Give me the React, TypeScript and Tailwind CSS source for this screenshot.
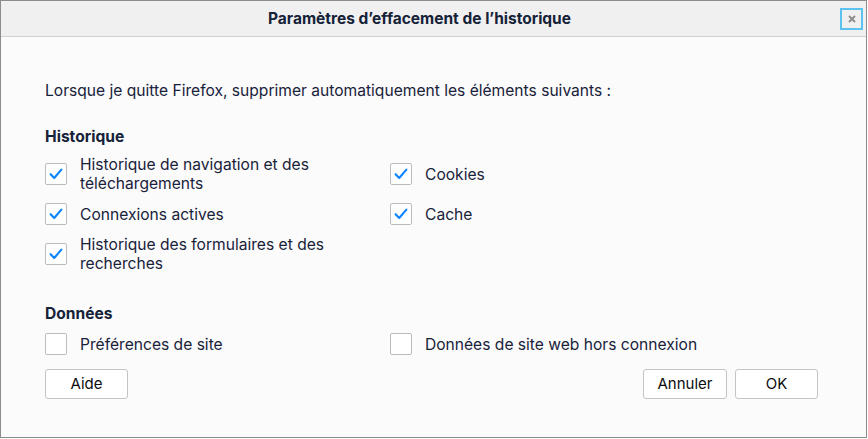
function Check({ checked }: { checked: boolean }) {
  return (
    <div className="flex h-[22px] w-[22px] shrink-0 items-center justify-center rounded-[2px] border border-[#bcbcbc] bg-white">
      {checked && (
        <svg width="14" height="12" viewBox="0 0 14 12" fill="none">
          <path d="M1.6 6.2 L5.2 10 L12.4 1.6" stroke="#0a84ff" strokeWidth="2.1" strokeLinecap="round" strokeLinejoin="round" />
        </svg>
      )}
    </div>
  );
}

function Item({ label, checked = true }: { label: string; checked?: boolean }) {
  return (
    <div className="flex items-center gap-[13px]">
      <Check checked={checked} />
      <span className="pr-[20px] leading-[19px]">{label}</span>
    </div>
  );
}

function Btn({ label, className }: { label: string; className: string }) {
  return (
    <button className={`h-[30px] rounded-[3px] border border-[#c4c4c4] bg-white text-[15px] text-[#0c0c0d] ${className}`}>
      {label}
    </button>
  );
}

export default function App() {
  return (
    <div className="h-[439px] w-[868px] bg-white" style={{ fontFamily: "Inter, 'Liberation Sans', sans-serif" }}>
      <div className="flex h-[438px] w-[867px] flex-col border border-[#8c8c8c] bg-[#fbfbfb] text-[15.6px] text-[#18223a]">
        <div className="relative flex h-[36px] items-center justify-center border-b border-[#d2d2d2] bg-[#f0f0f0] pr-[28px]">
          <span className="text-[15.5px] font-bold text-[#152238]">Paramètres d’effacement de l’historique</span>
          <div className="absolute right-[3px] top-[7px] flex h-[22px] w-[23px] items-center justify-center border-2 border-[#5cc3f0]">
            <svg width="8" height="8" viewBox="0 0 8 8">
              <path d="M1 1 L7 7 M7 1 L1 7" stroke="#8a8a8a" strokeWidth="1.8" />
            </svg>
          </div>
        </div>

        <div className="flex flex-1 flex-col px-[44px] pt-[44px]">
          <p className="leading-[19px]">Lorsque je quitte Firefox, supprimer automatiquement les éléments suivants :</p>

          <h2 className="mt-[27px] font-bold leading-[19px] text-[#152238]">Historique</h2>
          <div className="mt-[9px] grid grid-cols-[345px_1fr] items-center gap-y-[10px]">
            <Item label="Historique de navigation et des téléchargements" />
            <Item label="Cookies" />
            <Item label="Connexions actives" />
            <Item label="Cache" />
            <Item label="Historique des formulaires et des recherches" />
          </div>

          <h2 className="mt-[31px] font-bold leading-[19px] text-[#152238]">Données</h2>
          <div className="mt-[10px] grid grid-cols-[345px_1fr] items-center">
            <Item label="Préférences de site" checked={false} />
            <Item label="Données de site web hors connexion" checked={false} />
          </div>

          <div className="mt-[14px] flex">
            <Btn label="Aide" className="w-[83px]" />
            <div className="ml-auto flex gap-[8px] pr-[4px]">
              <Btn label="Annuler" className="w-[84px]" />
              <Btn label="OK" className="w-[83px]" />
            </div>
          </div>
        </div>
      </div>
    </div>
  );
}
